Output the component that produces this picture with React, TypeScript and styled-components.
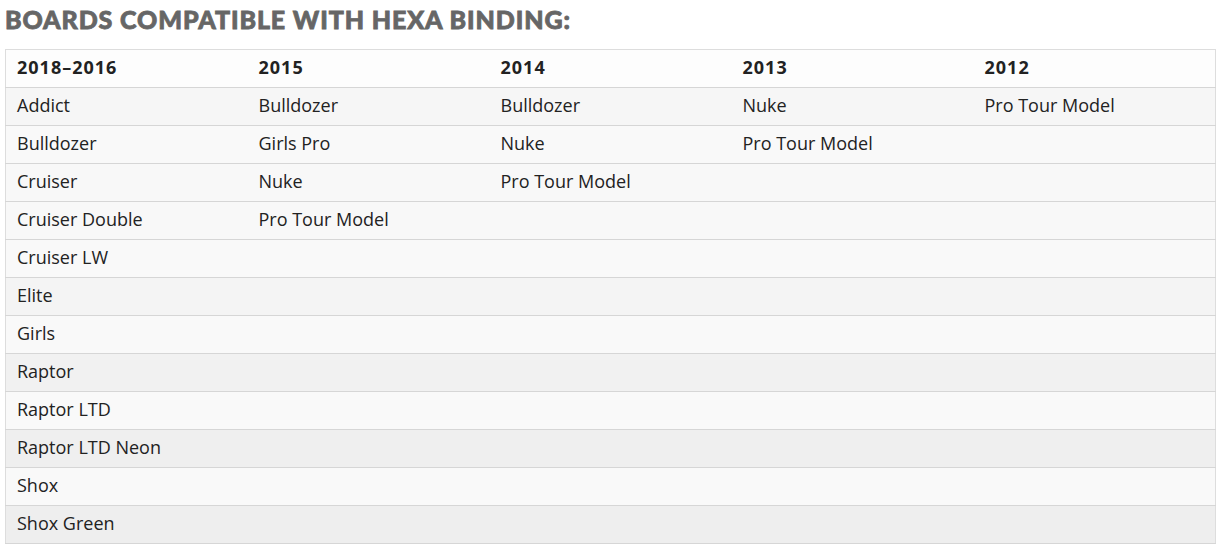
import React from "react";
import styled, { createGlobalStyle } from "styled-components";

const Global = createGlobalStyle`
  html, body { margin: 0; padding: 0; background: #fff; }
  body { font-family: "Open Sans", "Noto Sans", sans-serif; }
`;

const Page = styled.div`
  padding: 5px 3px 0 5px;
`;

const Title = styled.h2`
  margin: 0 0 16px 0;
  font-family: Lato, "Liberation Sans", sans-serif;
  font-weight: 900;
  font-size: 25px;
  line-height: 28px;
  color: #666;
  text-transform: uppercase;
  letter-spacing: 0.9px;
  -webkit-text-stroke: 0.8px #666;
`;

const Table = styled.table`
  width: 1211px;
  border-collapse: collapse;
  table-layout: fixed;
  border: 1px solid #ddd;
`;

const HeadCell = styled.th`
  height: 34px;
  padding: 0 11px 3px;
  text-align: left;
  font-size: 18px;
  font-weight: 700;
  letter-spacing: 1px;
  color: #222;
  background: #fdfdfd;
  border-bottom: 1px solid #d6d6d6;
`;

const Row = styled.tr<{ $bg: string }>`
  background: ${(p) => p.$bg};
  border-bottom: 1px solid #d6d6d6;
`;

const Cell = styled.td`
  height: 34px;
  padding: 0 11px 3px;
  font-size: 18px;
  color: #222;
`;

const years = ["2018–2016", "2015", "2014", "2013", "2012"];
const cols: string[][] = [
  ["Addict", "Bulldozer", "Cruiser", "Cruiser Double", "Cruiser LW", "Elite", "Girls", "Raptor", "Raptor LTD", "Raptor LTD Neon", "Shox", "Shox Green"],
  ["Bulldozer", "Girls Pro", "Nuke", "Pro Tour Model"],
  ["Bulldozer", "Nuke", "Pro Tour Model"],
  ["Nuke", "Pro Tour Model"],
  ["Pro Tour Model"],
];
const bgs = ["#f6f6f6", "#f9f9f9", "#f8f8f8", "#f8f8f8", "#f9f9f9", "#f4f4f4", "#f9f9f9", "#f1f1f1", "#f9f9f9", "#efefef", "#f9f9f9", "#eeeeee"];

export default function App() {
  return (
    <Page>
      <Global />
      <Title>Boards compatible with Hexa binding:</Title>
      <Table>
        <thead>
          <tr>
            {years.map((y) => (
              <HeadCell key={y}>{y}</HeadCell>
            ))}
          </tr>
        </thead>
        <tbody>
          {bgs.map((bg, i) => (
            <Row key={i} $bg={bg}>
              {cols.map((c, j) => (
                <Cell key={j}>{c[i] ?? ""}</Cell>
              ))}
            </Row>
          ))}
        </tbody>
      </Table>
    </Page>
  );
}
